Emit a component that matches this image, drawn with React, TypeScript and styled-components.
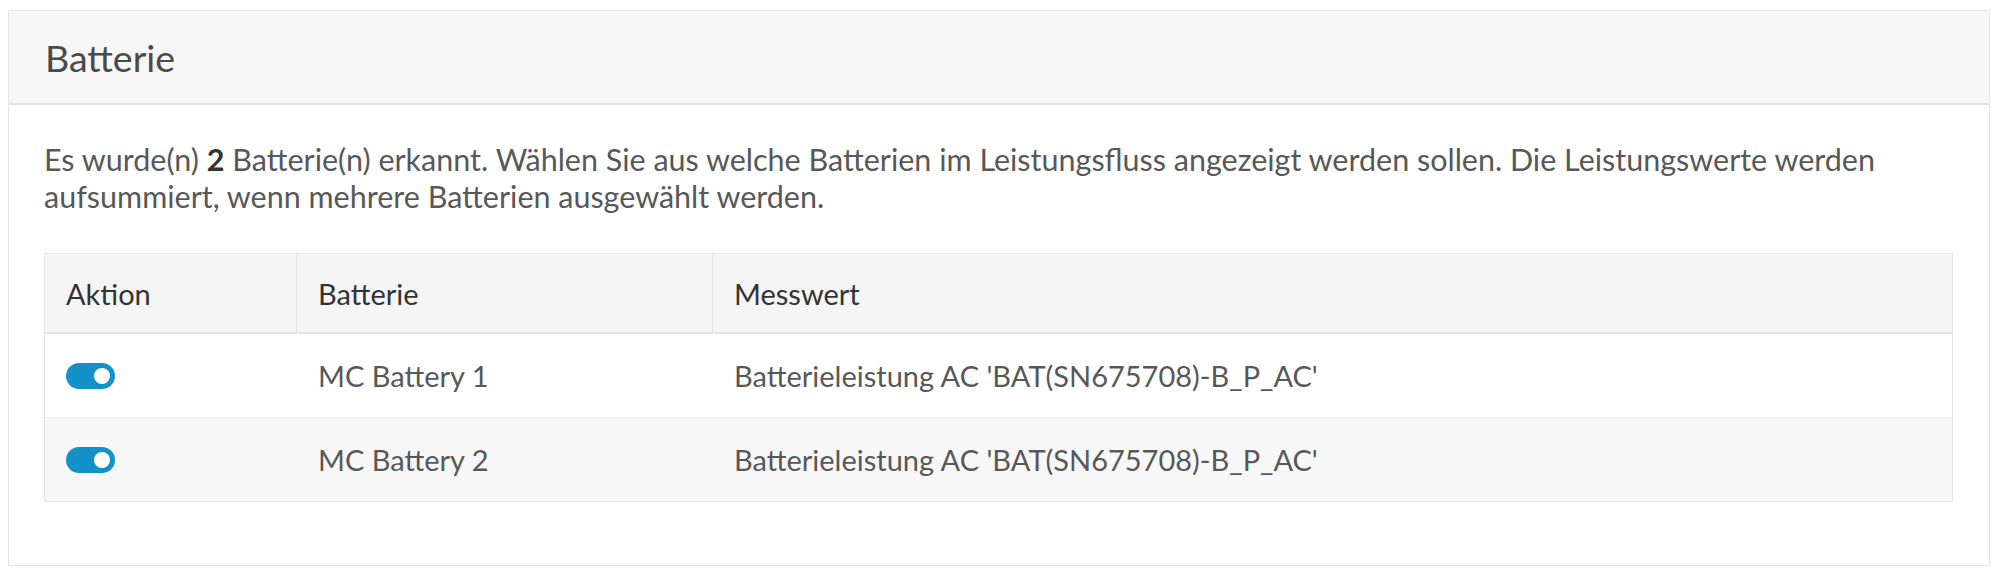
import styled, { createGlobalStyle } from 'styled-components';

const GlobalStyle = createGlobalStyle`
  body {
    margin: 0;
    background: #ffffff;
    font-family: Lato, "Open Sans", "Liberation Sans", sans-serif;
  }
`;

const Page = styled.div`
  padding: 10px 10px 8px 8px;
`;

const Panel = styled.section`
  border: 1px solid #e4e4e4;
  background: #ffffff;
`;

const PanelHeader = styled.header`
  height: 92px;
  display: flex;
  align-items: center;
  padding-left: 36px;
  background: #f7f7f7;
  border-bottom: 2px solid #e2e2e2;
`;

const PanelTitle = styled.h2`
  margin: 0;
  font-size: 37.5px;
  font-weight: 400;
  color: #4a4a4a;
`;

const PanelBody = styled.div`
  padding: 36px 36px 63px 35px;
`;

const Intro = styled.p`
  margin: 0 0 38px 0;
  font-size: 30.5px;
  line-height: 37px;
  color: #585858;

  strong {
    color: #333333;
    font-weight: 700;
  }
`;

const Table = styled.div`
  display: grid;
  grid-template-columns: 252px 416px 1fr;
  border: 1px solid #e4e4e4;
`;

const HeadCell = styled.div<{ $last?: boolean }>`
  height: 78px;
  display: flex;
  align-items: center;
  padding-left: 21px;
  background: #f5f5f5;
  border-bottom: 2px solid #e4e4e4;
  border-right: ${(p) => (p.$last ? 'none' : '1px solid #e4e4e4')};
  font-size: 29px;
  color: #333333;
`;

const Cell = styled.div<{ $striped?: boolean; $lastRow?: boolean }>`
  height: 83px;
  display: flex;
  align-items: center;
  padding-left: 21px;
  background: ${(p) => (p.$striped ? '#f7f7f7' : '#ffffff')};
  border-bottom: ${(p) => (p.$lastRow ? 'none' : '1px solid #efefef')};
  font-size: 29px;
  color: #585858;
`;

const Toggle = styled.span<{ $on: boolean }>`
  width: 49px;
  height: 26px;
  border-radius: 13px;
  background: ${(p) => (p.$on ? '#1591c9' : '#c8c8c8')};
  display: flex;
  align-items: center;
  justify-content: ${(p) => (p.$on ? 'flex-end' : 'flex-start')};
  padding: 0 5px;
  box-sizing: border-box;

  &::after {
    content: '';
    width: 16px;
    height: 16px;
    border-radius: 50%;
    background: #ffffff;
  }
`;

const batteries = [
  { name: 'MC Battery 1', value: "Batterieleistung AC 'BAT(SN675708)-B_P_AC'", on: true },
  { name: 'MC Battery 2', value: "Batterieleistung AC 'BAT(SN675708)-B_P_AC'", on: true },
];

export default function App() {
  return (
    <>
      <GlobalStyle />
      <Page>
        <Panel>
          <PanelHeader>
            <PanelTitle>Batterie</PanelTitle>
          </PanelHeader>
          <PanelBody>
            <Intro>
              Es wurde(n) <strong>2</strong> Batterie(n) erkannt. Wählen Sie aus welche Batterien im
              Leistungsfluss angezeigt werden sollen. Die Leistungswerte werden
              <br />
              aufsummiert, wenn mehrere Batterien ausgewählt werden.
            </Intro>
            <Table>
              <HeadCell>Aktion</HeadCell>
              <HeadCell>Batterie</HeadCell>
              <HeadCell $last>Messwert</HeadCell>
              {batteries.map((b, i) => {
                const striped = i % 2 === 1;
                const lastRow = i === batteries.length - 1;
                return [
                  <Cell key={`a${i}`} $striped={striped} $lastRow={lastRow}>
                    <Toggle $on={b.on} />
                  </Cell>,
                  <Cell key={`b${i}`} $striped={striped} $lastRow={lastRow}>
                    {b.name}
                  </Cell>,
                  <Cell key={`c${i}`} $striped={striped} $lastRow={lastRow}>
                    {b.value}
                  </Cell>,
                ];
              })}
            </Table>
          </PanelBody>
        </Panel>
      </Page>
    </>
  );
}
